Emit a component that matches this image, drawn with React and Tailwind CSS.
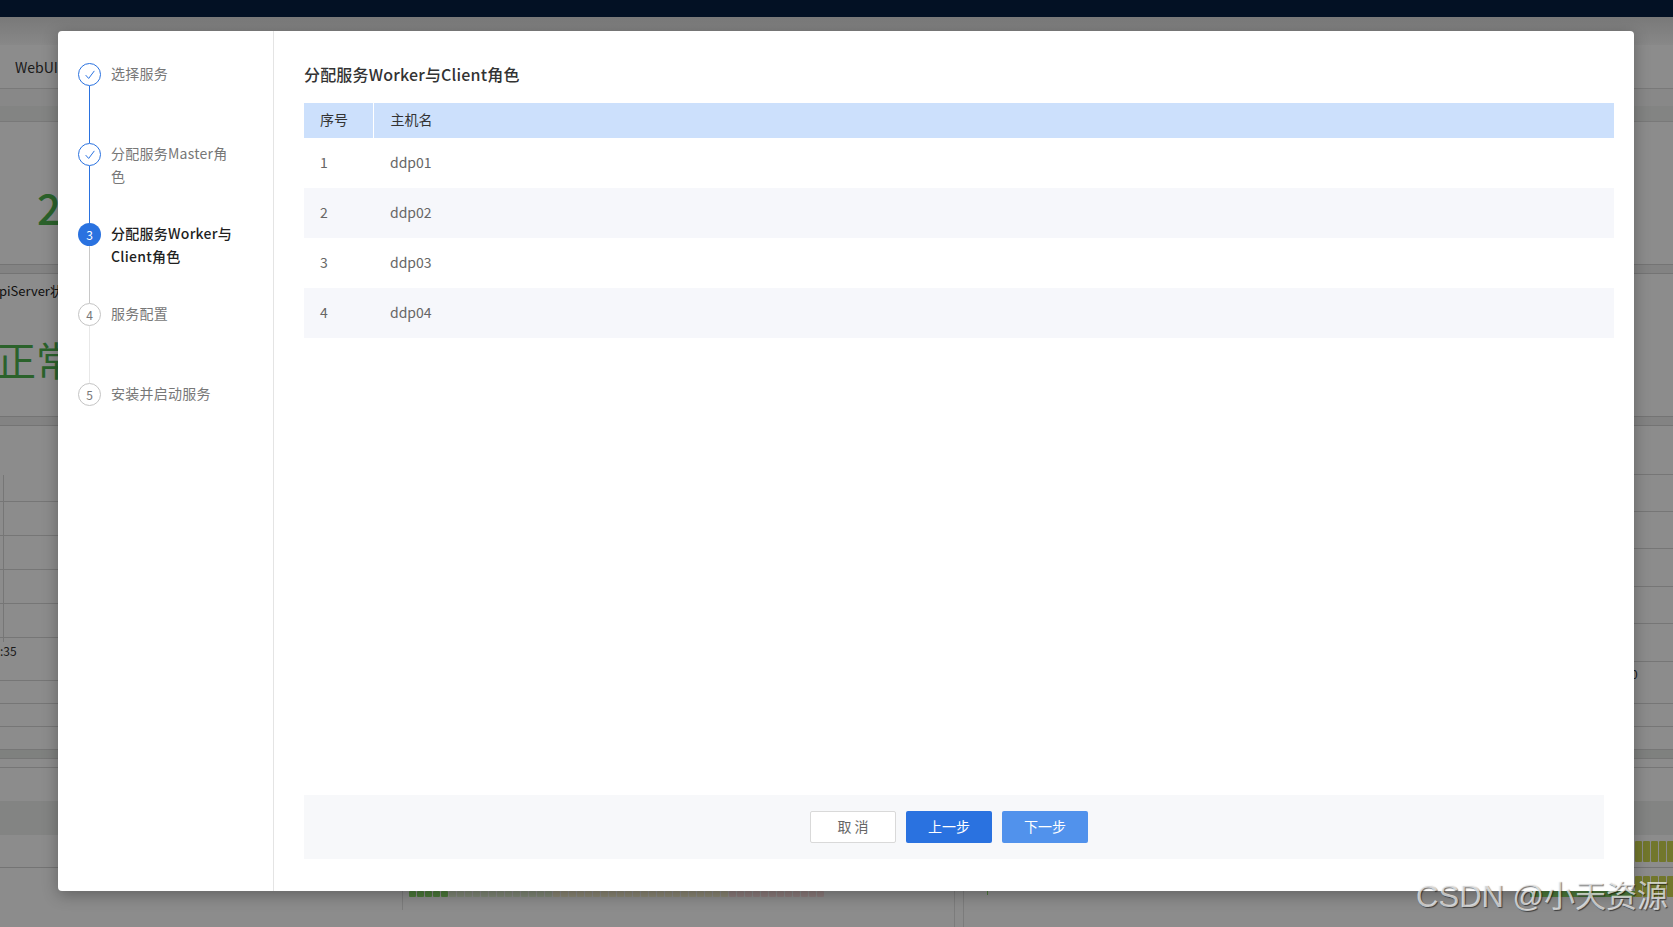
const FONT = "font-['Noto_Sans_CJK_SC','Noto_Sans',sans-serif]";

const steps = [
  { label: "选择服务", state: "done", line: "bg-[#2a72e0]" },
  { label: "分配服务Master角色", state: "done", line: "bg-[#2a72e0]" },
  { label: "分配服务Worker与Client角色", state: "active", n: 3, line: "bg-[#c8c8c8]" },
  { label: "服务配置", state: "todo", n: 4, line: "bg-[#e8e8e8]" },
  { label: "安装并启动服务", state: "todo", n: 5 },
];

const hosts = ["ddp01", "ddp02", "ddp03", "ddp04"];

const leftRows = ["h-[76px]", "h-[34px]", "h-[34px]", "h-[34px]", "h-[34px]", "h-[43px]", "h-[23px]", "h-[23px]", "h-[23px]", "h-[9px] bg-[#e8ebe8]", "h-[9px]"];
const rightRows = ["h-[49px]", "h-[37px]", "h-[37px]", "h-[38px]", "h-[37px]", "h-[38px]", "h-[42px]", "h-[23px]", "h-[23px]", "h-[9px] bg-[#e8ebe8]", "h-[9px]"];

const meter = Array.from({ length: 52 }, (_, i) => i);
const blocks = Array.from({ length: 5 }, (_, i) => i);

function StepIcon({ step }) {
  if (step.state === "done") {
    return (
      <span className="flex h-[23px] w-[23px] shrink-0 items-center justify-center rounded-full border border-[#2a72e0] bg-white">
        <svg width="10" height="10" viewBox="0 0 9 9" fill="none" stroke="#2a72e0" strokeWidth="0.9">
          <path d="M0.6 4.6 L3.3 7.6 L8.4 0.8" />
        </svg>
      </span>
    );
  }
  if (step.state === "active") {
    return (
      <span className="flex h-[23px] w-[23px] shrink-0 items-center justify-center rounded-full bg-[#2a72e0] text-xs text-white">
        {step.n}
      </span>
    );
  }
  return (
    <span className="flex h-[23px] w-[23px] shrink-0 items-center justify-center rounded-full border border-[#c4c4c4] bg-white text-xs text-[#777]">
      {step.n}
    </span>
  );
}

function Step({ step }) {
  const active = step.state === "active";
  return (
    <div className="flex h-[80px] gap-[10px]">
      <div className="flex w-[23px] shrink-0 flex-col items-center">
        <StepIcon step={step} />
        {step.line && <span className={`w-[1.5px] flex-1 ${step.line}`} />}
      </div>
      <div className={`-mt-[1px] w-[124px] text-sm leading-[23px] tracking-[0.25px] ${active ? "font-medium text-[#1f1f1f]" : "text-[#777]"}`}>
        {step.label}
      </div>
    </div>
  );
}

function Backdrop() {
  return (
    <div className="flex h-[910px] flex-col bg-white">
      <div className="h-[28px] bg-gradient-to-b from-[#dcdcdc] to-[#f8f8f8]" />
      <div className="flex h-[44px] items-center border-b border-[#dcdcdc] pl-[15px] text-sm text-[#333]">WebUI</div>
      <div className="h-[17px] bg-[#f8f8f8]" />
      <div className="h-[16px] border-b border-[#dcdcdc] bg-[#eef0ee]" />
      <div className="flex h-[143px] items-center border-b border-[#d4d4d4] pl-[37px] pt-[26px] text-[42px] font-medium text-[#4fb34f]">2</div>
      <div className="h-[9px] border-b border-[#d4d4d4] bg-[#eeeeee]" />
      <div className="h-[143px] overflow-hidden border-b border-[#d4d4d4] pl-[2px]">
        <div className="-ml-[11px] pt-[7px] text-[13px] whitespace-nowrap text-[#222]">ApiServer状态</div>
        <div className="-ml-[6px] pt-[33px] text-[40px] leading-[50px] whitespace-nowrap text-[#4fb34f]">正常</div>
      </div>
      <div className="h-[9px] border-b border-[#d4d4d4] bg-[#eeeeee]" />
      <div className="flex h-[342px]">
        <div className="relative w-[300px] shrink-0">
          {leftRows.map((h, i) => (
            <div key={i} className={`${h} border-b border-[#d8d8d8]`} />
          ))}
          <div className="absolute top-[49px] left-[3px] h-[167px] w-px bg-[#d8d8d8]" />
          <div className="absolute top-[217px] left-0 text-xs leading-4 text-[#333]">:35</div>
        </div>
        <div className="flex-1" />
        <div className="relative w-[100px] shrink-0">
          {rightRows.map((h, i) => (
            <div key={i} className={`${h} border-b border-[#d8d8d8]`} />
          ))}
          <div className="absolute top-[240px] left-[58px] text-xs leading-4 text-[#333]">0</div>
        </div>
      </div>
      <div className="h-[33px]" />
      <div className="h-[34px] bg-[#eef0ee]" />
      <div className="h-[33px] border-b border-[#d4d4d4]" />
      <div className="h-[42px]" />
    </div>
  );
}

function BottomDetails() {
  return (
    <>
      <div className="absolute top-[891px] left-[402px] h-[19px] w-px bg-[#7c7c7c]" />
      <div className="absolute top-[891px] left-[409px] flex gap-px">
        {meter.map((i) => (
          <span
            key={i}
            className={`h-[6px] w-[7px] rounded-[1px] ${i < 5 ? "bg-[#4c7a3a]" : i < 18 ? "bg-[#7f8776]" : i < 40 ? "bg-[#8a8674]" : "bg-[#8c7c7c]"}`}
          />
        ))}
      </div>
      <div className="absolute top-[891px] bottom-0 left-[954px] w-px bg-[#7c7c7c]" />
      <div className="absolute top-[891px] bottom-0 left-[963px] w-px bg-[#7c7c7c]" />
      <div className="absolute top-[891px] left-[987px] h-[4px] w-px bg-[#4c7a3a]" />
      <div className="absolute top-[841px] left-[1635px] flex gap-px">
        {blocks.map((i) => (
          <span key={i} className="h-[21px] w-[7px] rounded-[1px] bg-[#72772c]" />
        ))}
      </div>
      <div className="absolute top-[876px] left-[1635px] flex gap-px">
        {blocks.map((i) => (
          <span key={i} className="h-[21px] w-[7px] rounded-[1px] bg-[#72772c]" />
        ))}
      </div>
      <div className="absolute top-[891px] left-[1530px] h-[6px] w-[105px] bg-[#4c7a3a]" />
    </>
  );
}

function Modal() {
  return (
    <div className="absolute top-[31px] left-[58px] flex h-[860px] w-[1576px] rounded-[4px] bg-white shadow-[0_4px_16px_rgba(0,0,0,0.3)]">
      <aside className="w-[216px] shrink-0 border-r border-[#e4e4e4] pt-[32px] pl-[20px]">
        {steps.map((s) => (
          <Step key={s.label} step={s} />
        ))}
      </aside>
      <main className="flex flex-1 flex-col pt-[31px] pr-[20px] pb-[32px] pl-[30px]">
        <h2 className="mb-[17px] text-base leading-6 font-medium tracking-[0.18px] text-[#333]">分配服务Worker与Client角色</h2>
        <table className="w-full table-fixed border-collapse text-sm">
          <thead>
            <tr className="h-[35px] bg-[#cce0fc] text-left text-[#333]">
              <th className="w-[69px] border-r border-white pb-[3px] pl-4 font-normal">序号</th>
              <th className="pb-[3px] pl-[17px] font-normal">主机名</th>
            </tr>
          </thead>
          <tbody className="text-[#666]">
            {hosts.map((h, i) => (
              <tr key={h} className={`h-[50px] ${i % 2 === 1 ? "bg-[#f6f7fb]" : ""}`}>
                <td className="pb-[2px] pl-4">{i + 1}</td>
                <td className="pb-[2px] pl-[17px]">{h}</td>
              </tr>
            ))}
          </tbody>
        </table>
        <div className="mt-auto mr-[10px] flex h-[64px] items-center justify-center gap-[10px] bg-[#f7f8fa] pr-[10px] text-sm">
          <button className="h-[32px] w-[86px] rounded-[2px] border border-[#d9d9d9] bg-white pb-[2px] text-[#666]">取 消</button>
          <button className="h-[32px] w-[86px] rounded-[2px] bg-[#2a72e0] pb-[2px] text-white">上一步</button>
          <button className="h-[32px] w-[86px] rounded-[2px] bg-[#5192ec] pb-[2px] text-white">下一步</button>
        </div>
      </main>
    </div>
  );
}

export default function App() {
  return (
    <div className={`relative h-[927px] overflow-hidden ${FONT}`}>
      <div className="h-[17px] bg-[#031124]" />
      <Backdrop />
      <div className="absolute inset-x-0 top-[17px] bottom-0 bg-black/45" />
      <BottomDetails />
      <Modal />
      <div className="absolute top-[877px] right-[5px] font-['Liberation_Sans','Noto_Sans_CJK_SC',sans-serif] text-[31px] leading-[40px] whitespace-nowrap text-white/70 [text-shadow:1px_1px_1px_rgba(0,0,0,0.55)]">
        CSDN @小天资源
      </div>
    </div>
  );
}
